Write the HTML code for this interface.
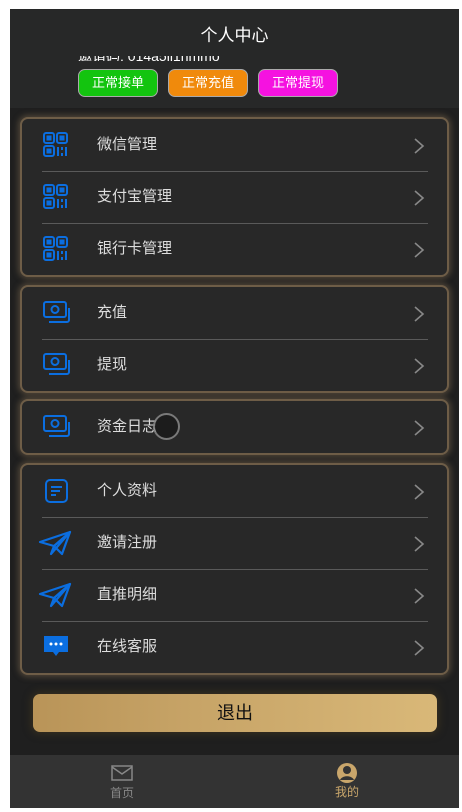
<!DOCTYPE html>
<html><head><meta charset="utf-8"><style>
*{margin:0;padding:0;box-sizing:border-box}
body{width:462px;height:812px;background:#fff;font-family:"Liberation Sans","Noto Sans CJK SC",sans-serif;position:relative;overflow:hidden}
#app{position:absolute;left:10px;top:9px;width:449px;height:799px;background:#1f1f1f}
.hdr{position:absolute;left:0;top:0;width:449px;height:99px;background:#272828}
.title{position:absolute;top:12px;width:100%;text-align:center;color:#fff;font-size:17px}
.sub{position:absolute;left:68px;top:47px;height:5px;width:190px;overflow:hidden;color:#fff;font-size:14px;line-height:0px}
.tags{position:absolute;left:68px;top:60px;display:flex;gap:10px}
.tag{width:80px;height:28px;border-radius:7px;border:1px solid #aaa;color:#fff;font-size:13px;text-align:center;line-height:26px}
.card{position:absolute;left:10px;width:429px;background:#282828;border:2px solid #6e5d47;border-radius:8px;box-shadow:0 0 6px 2px rgba(110,93,71,.6)}
.row{position:relative;height:52px}
.row+.row:before{content:"";position:absolute;left:20px;right:19px;top:0;height:1px;background:#5a5a5a}
.row .t{position:absolute;left:75px;top:0;line-height:52px;color:#ddd;font-size:15px}
.row .ic{position:absolute;left:20px;top:12px}
.row .ar{position:absolute;right:22px;top:19px}
.btn{position:absolute;left:23px;top:685px;width:404px;height:38px;border-radius:7px;background:linear-gradient(90deg,#b99458,#c7a467 40%,#d9b878);text-align:center;line-height:38px;font-size:18px;color:#111;box-shadow:0 0 8px 2px rgba(60,50,30,.8)}
.tab{position:absolute;left:0;top:746px;width:449px;height:53px;background:#333}
.ti{position:absolute;top:0;width:60px;text-align:center;font-size:12px}
</style></head><body><div id="app">
<div class="hdr"><div class="title">个人中心</div>
<div class="sub">邀请码: 014a5jj1hmmo</div>
<div class="tags"><div class="tag" style="background:#13c40f">正常接单</div><div class="tag" style="background:#f08a0c">正常充值</div><div class="tag" style="background:#f512e0">正常提现</div></div></div>

<div class="card" style="top:108px">
<div class="row"><svg class="ic" width="28" height="28" viewBox="0 0 28 28" fill="none" stroke="#0b6ee0" stroke-width="2"><rect x="2" y="2" width="10" height="10" rx="2"/><rect x="15" y="2" width="10" height="10" rx="2"/><rect x="2" y="15" width="10" height="10" rx="2"/><rect x="5.5" y="5.5" width="3" height="3" fill="#0b6ee0"/><rect x="18.5" y="5.5" width="3" height="3" fill="#0b6ee0"/><rect x="5.5" y="18.5" width="3" height="3" fill="#0b6ee0"/><path d="M16 16v9M20 16v3M20 22v3M24 16v9"/></svg><span class="t">微信管理</span><svg class="ar" width="12" height="16"><path d="M2 1l8 7-8 7" fill="none" stroke="#888" stroke-width="1.6"/></svg></div>
<div class="row"><svg class="ic" width="28" height="28" viewBox="0 0 28 28" fill="none" stroke="#0b6ee0" stroke-width="2"><rect x="2" y="2" width="10" height="10" rx="2"/><rect x="15" y="2" width="10" height="10" rx="2"/><rect x="2" y="15" width="10" height="10" rx="2"/><rect x="5.5" y="5.5" width="3" height="3" fill="#0b6ee0"/><rect x="18.5" y="5.5" width="3" height="3" fill="#0b6ee0"/><rect x="5.5" y="18.5" width="3" height="3" fill="#0b6ee0"/><path d="M16 16v9M20 16v3M20 22v3M24 16v9"/></svg><span class="t">支付宝管理</span><svg class="ar" width="12" height="16"><path d="M2 1l8 7-8 7" fill="none" stroke="#888" stroke-width="1.6"/></svg></div>
<div class="row"><svg class="ic" width="28" height="28" viewBox="0 0 28 28" fill="none" stroke="#0b6ee0" stroke-width="2"><rect x="2" y="2" width="10" height="10" rx="2"/><rect x="15" y="2" width="10" height="10" rx="2"/><rect x="2" y="15" width="10" height="10" rx="2"/><rect x="5.5" y="5.5" width="3" height="3" fill="#0b6ee0"/><rect x="18.5" y="5.5" width="3" height="3" fill="#0b6ee0"/><rect x="5.5" y="18.5" width="3" height="3" fill="#0b6ee0"/><path d="M16 16v9M20 16v3M20 22v3M24 16v9"/></svg><span class="t">银行卡管理</span><svg class="ar" width="12" height="16"><path d="M2 1l8 7-8 7" fill="none" stroke="#888" stroke-width="1.6"/></svg></div>
</div>

<div class="card" style="top:276px">
<div class="row"><svg class="ic" width="30" height="28" viewBox="0 0 30 28" fill="none" stroke="#0b6ee0" stroke-width="2"><rect x="2" y="3" width="22" height="15" rx="2"/><circle cx="13" cy="10.5" r="3.5"/><path d="M27 9v12a2 2 0 0 1-2 2H7"/></svg><span class="t">充值</span><svg class="ar" width="12" height="16"><path d="M2 1l8 7-8 7" fill="none" stroke="#888" stroke-width="1.6"/></svg></div>
<div class="row"><svg class="ic" width="30" height="28" viewBox="0 0 30 28" fill="none" stroke="#0b6ee0" stroke-width="2"><rect x="2" y="3" width="22" height="15" rx="2"/><circle cx="13" cy="10.5" r="3.5"/><path d="M27 9v12a2 2 0 0 1-2 2H7"/></svg><span class="t">提现</span><svg class="ar" width="12" height="16"><path d="M2 1l8 7-8 7" fill="none" stroke="#888" stroke-width="1.6"/></svg></div>
</div>

<div class="card" style="top:390px">
<div class="row"><svg class="ic" width="30" height="28" viewBox="0 0 30 28" fill="none" stroke="#0b6ee0" stroke-width="2"><rect x="2" y="3" width="22" height="15" rx="2"/><circle cx="13" cy="10.5" r="3.5"/><path d="M27 9v12a2 2 0 0 1-2 2H7"/></svg><span class="t">资金日志</span><div style="position:absolute;left:131px;top:12px;width:27px;height:27px;border-radius:50%;border:2px solid #888;background:#1a1a1a;opacity:.85"></div><svg class="ar" width="12" height="16"><path d="M2 1l8 7-8 7" fill="none" stroke="#888" stroke-width="1.6"/></svg></div>
</div>

<div class="card" style="top:454px">
<div class="row"><svg class="ic" width="28" height="28" viewBox="0 0 28 28" fill="none" stroke="#0b6ee0" stroke-width="2"><rect x="4" y="3" width="21" height="22" rx="4"/><path d="M9 10h11M9 14h9M9 18h5"/></svg><span class="t">个人资料</span><svg class="ar" width="12" height="16"><path d="M2 1l8 7-8 7" fill="none" stroke="#888" stroke-width="1.6"/></svg></div>
<div class="row"><svg class="ic" width="34" height="28" viewBox="0 0 34 28" fill="none" stroke="#0b6ee0" stroke-width="2.2" stroke-linejoin="round" style="left:16px"><path d="M2 13L32 3 24 25 16 17z"/><path d="M32 3L16 17 13 25z"/></svg><span class="t">邀请注册</span><svg class="ar" width="12" height="16"><path d="M2 1l8 7-8 7" fill="none" stroke="#888" stroke-width="1.6"/></svg></div>
<div class="row"><svg class="ic" width="34" height="28" viewBox="0 0 34 28" fill="none" stroke="#0b6ee0" stroke-width="2.2" stroke-linejoin="round" style="left:16px"><path d="M2 13L32 3 24 25 16 17z"/><path d="M32 3L16 17 13 25z"/></svg><span class="t">直推明细</span><svg class="ar" width="12" height="16"><path d="M2 1l8 7-8 7" fill="none" stroke="#888" stroke-width="1.6"/></svg></div>
<div class="row"><svg class="ic" width="28" height="28" viewBox="0 0 28 28"><path d="M2 3h24v16H17l-3 4-3-4H2z" fill="#0b6ee0"/><circle cx="9" cy="11" r="1.5" fill="#fff"/><circle cx="14" cy="11" r="1.5" fill="#fff"/><circle cx="19" cy="11" r="1.5" fill="#fff"/></svg><span class="t">在线客服</span><svg class="ar" width="12" height="16"><path d="M2 1l8 7-8 7" fill="none" stroke="#888" stroke-width="1.6"/></svg></div>
</div>

<div class="btn">退出</div>
<div class="tab">
<div class="ti" style="left:82px;color:#888"><svg width="22" height="16" viewBox="0 0 22 16" style="margin-top:10px"><rect x="1" y="1" width="20" height="14" fill="none" stroke="#888" stroke-width="1.5"/><path d="M1 2l10 7 10-7" fill="none" stroke="#888" stroke-width="1.5"/></svg><div>首页</div></div>
<div class="ti" style="left:307px;color:#c9a66b"><svg width="22" height="22" viewBox="0 0 22 22" style="margin-top:7px"><circle cx="11" cy="11" r="10" fill="#c9a66b"/><circle cx="11" cy="8" r="4" fill="#333"/><path d="M4 18c2-5 12-5 14 0" fill="#333"/></svg><div style="margin-top:-4px">我的</div></div>
</div>
</div></body></html>
